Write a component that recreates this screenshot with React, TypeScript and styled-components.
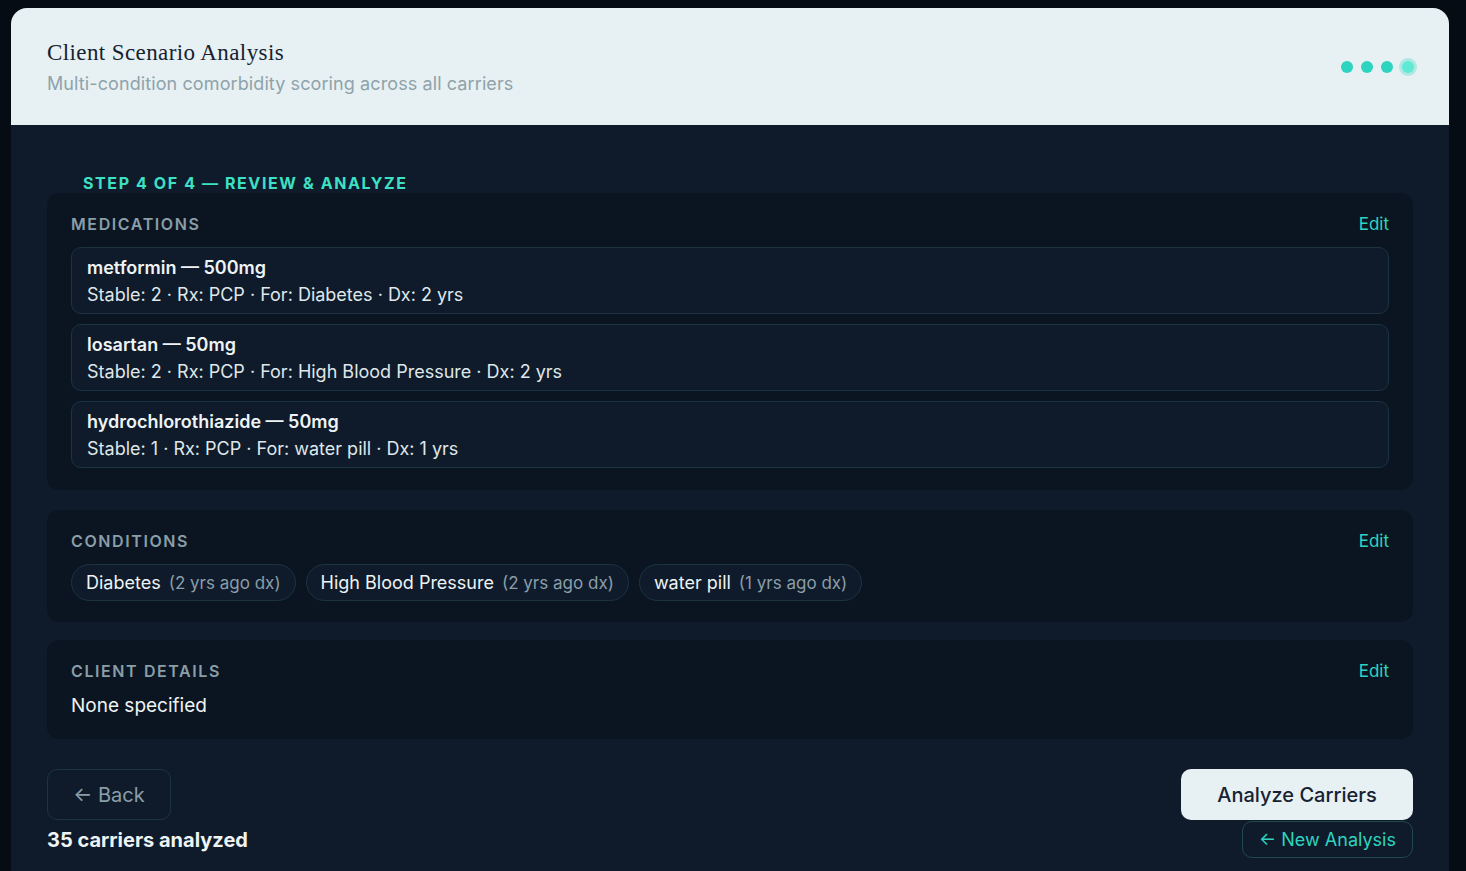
import React from 'react';
import styled, {createGlobalStyle} from 'styled-components';

const GlobalStyle = createGlobalStyle`
    html, body {
        margin: 0;
        background: #060c14;
        font-family: Inter, "Noto Sans", sans-serif;
        color: #e6eef0;
    }
    * { box-sizing: border-box; }
`

const Shell = styled.div`
    margin: 8px 17px 0 11px;
    border-radius: 16px 16px 0 0;
    overflow: hidden;
    background: #0f1b2b;
    min-height: 863px;
`

const Header = styled.header`
    display: flex;
    align-items: center;
    justify-content: space-between;
    background: #e7f0f2;
    height: 117px;
    padding: 0 35px 0 36px;
`

const Title = styled.h1`
    margin: 0;
    font-family: "Liberation Serif", serif;
    font-weight: 400;
    font-size: 23px;
    letter-spacing: 0.4px;
    color: #162231;
`

const Subtitle = styled.p`
    margin: 7px 0 0;
    font-size: 18px;
    letter-spacing: 0.1px;
    color: #8fa3ab;
`

const Dots = styled.div`
    display: flex;
    align-items: center;
    gap: 8px;
`

const Dot = styled.span<{$active?: boolean}>`
    width: 12px;
    height: 12px;
    border-radius: 50%;
    background: ${p => p.$active ? '#5eead4' : '#2dd4bf'};
    box-shadow: ${p => p.$active ? '0 0 0 3px rgba(45, 212, 191, 0.3)' : 'none'};
    margin-left: ${p => p.$active ? '1px' : '0'};
`

const Body = styled.main`
    padding: 48px 36px 0;
`

const StepLabel = styled.div`
    padding-left: 36px;
    font-size: 16px;
    font-weight: 700;
    letter-spacing: 1.6px;
    color: #3ee0c4;
    line-height: 20px;
`

const Section = styled.section<{$gap?: number; $bottom?: number}>`
    background: #0b1522;
    border-radius: 12px;
    padding: 20px 24px ${p => p.$bottom ?? 21}px;
    margin-bottom: ${p => p.$gap ?? 19}px;
`

const SectionHead = styled.div`
    display: flex;
    justify-content: space-between;
    align-items: center;
    height: 22px;
    margin-bottom: 12px;
`

const SectionTitle = styled.h2`
    margin: 0;
    font-size: 16px;
    font-weight: 600;
    letter-spacing: 1.6px;
    color: #8a9ea8;
`

const EditLink = styled.button`
    background: none;
    border: none;
    padding: 0;
    font: inherit;
    font-size: 17px;
    color: #2dd4bf;
    cursor: pointer;
`

const MedList = styled.div`
    display: flex;
    flex-direction: column;
    gap: 10px;
`

const MedCard = styled.div`
    background: #0f1b2b;
    border: 1px solid #1b3440;
    border-radius: 10px;
    padding: 7px 15px 4px;
`

const MedName = styled.div`
    font-size: 18px;
    font-weight: 600;
    line-height: 26px;
    color: #eef3f4;
`

const MedMeta = styled.div`
    font-size: 18px;
    line-height: 28px;
    color: #dfe7ea;
`

const ChipRow = styled.div`
    display: flex;
    gap: 10px;
`

const Chip = styled.span`
    display: inline-flex;
    align-items: center;
    gap: 8px;
    height: 37px;
    padding: 0 14px;
    border: 1px solid #1b3440;
    border-radius: 999px;
    background: #0f1b2b;
    font-size: 18px;
    color: #eef3f4;
`

const ChipNote = styled.span`
    font-size: 17px;
    color: #8a9ea8;
`

const PlainText = styled.div`
    font-size: 19px;
    color: #eef3f4;
    line-height: 24px;
`

const Footer = styled.div`
    display: flex;
    justify-content: space-between;
    align-items: flex-start;
    margin-top: 30px;
`

const FooterCol = styled.div<{$end?: boolean}>`
    display: flex;
    flex-direction: column;
    align-items: ${p => p.$end ? 'flex-end' : 'flex-start'};
`

const GhostButton = styled.button`
    height: 51px;
    width: 124px;
    border: 1px solid #1b3440;
    border-radius: 10px;
    background: transparent;
    font: inherit;
    font-size: 20px;
    color: #8a9ea8;
`

const PrimaryButton = styled.button`
    height: 51px;
    width: 232px;
    border: none;
    border-radius: 10px;
    background: #e7f0f2;
    font: inherit;
    font-size: 20px;
    font-weight: 500;
    color: #162231;
`

const OutlineTeal = styled.button`
    height: 37px;
    width: 171px;
    margin-top: 1px;
    border: 1px solid #1e4a4c;
    border-radius: 10px;
    background: transparent;
    font: inherit;
    font-size: 18px;
    color: #2dd4bf;
`

const Summary = styled.div`
    margin-top: 8px;
    font-size: 20px;
    font-weight: 700;
    color: #eef3f4;
`

const meds = [
    {name: 'metformin — 500mg', meta: 'Stable: 2 · Rx: PCP · For: Diabetes · Dx: 2 yrs'},
    {name: 'losartan — 50mg', meta: 'Stable: 2 · Rx: PCP · For: High Blood Pressure · Dx: 2 yrs'},
    {name: 'hydrochlorothiazide — 50mg', meta: 'Stable: 1 · Rx: PCP · For: water pill · Dx: 1 yrs'},
]

const conditions = [
    {name: 'Diabetes', note: '(2 yrs ago dx)'},
    {name: 'High Blood Pressure', note: '(2 yrs ago dx)'},
    {name: 'water pill', note: '(1 yrs ago dx)'},
]

export default function App() {
    return (
        <>
            <GlobalStyle/>
            <Shell>
                <Header>
                    <div>
                        <Title>Client Scenario Analysis</Title>
                        <Subtitle>Multi-condition comorbidity scoring across all carriers</Subtitle>
                    </div>
                    <Dots>
                        <Dot/>
                        <Dot/>
                        <Dot/>
                        <Dot $active/>
                    </Dots>
                </Header>
                <Body>
                    <StepLabel>STEP 4 OF 4 — REVIEW &amp; ANALYZE</StepLabel>
                    <Section $bottom={22} $gap={20}>
                        <SectionHead>
                            <SectionTitle>MEDICATIONS</SectionTitle>
                            <EditLink>Edit</EditLink>
                        </SectionHead>
                        <MedList>
                            {meds.map(m => (
                                <MedCard key={m.name}>
                                    <MedName>{m.name}</MedName>
                                    <MedMeta>{m.meta}</MedMeta>
                                </MedCard>
                            ))}
                        </MedList>
                    </Section>
                    <Section $gap={18}>
                        <SectionHead>
                            <SectionTitle>CONDITIONS</SectionTitle>
                            <EditLink>Edit</EditLink>
                        </SectionHead>
                        <ChipRow>
                            {conditions.map(c => (
                                <Chip key={c.name}>
                                    {c.name}
                                    <ChipNote>{c.note}</ChipNote>
                                </Chip>
                            ))}
                        </ChipRow>
                    </Section>
                    <Section $gap={0}>
                        <SectionHead>
                            <SectionTitle>CLIENT DETAILS</SectionTitle>
                            <EditLink>Edit</EditLink>
                        </SectionHead>
                        <PlainText>None specified</PlainText>
                    </Section>
                    <Footer>
                        <FooterCol>
                            <GhostButton>← Back</GhostButton>
                            <Summary>35 carriers analyzed</Summary>
                        </FooterCol>
                        <FooterCol $end>
                            <PrimaryButton>Analyze Carriers</PrimaryButton>
                            <OutlineTeal>← New Analysis</OutlineTeal>
                        </FooterCol>
                    </Footer>
                </Body>
            </Shell>
        </>
    )
}
